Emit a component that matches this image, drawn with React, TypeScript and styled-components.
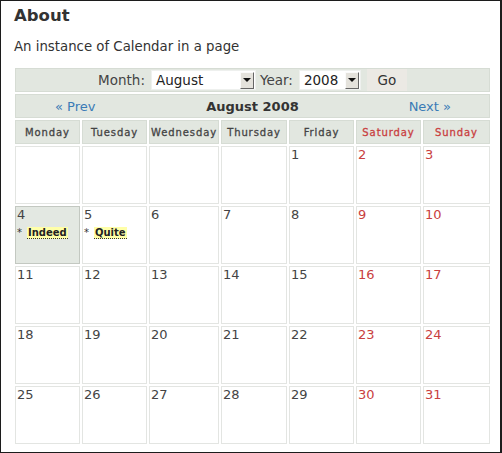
import React from "react";
import styled, { createGlobalStyle } from "styled-components";

const Global = createGlobalStyle`
  html, body { margin: 0; padding: 0; background: #fff; }
  body { font-family: "DejaVu Sans", Verdana, sans-serif; }
`;

const Frame = styled.div`
  box-sizing: border-box;
  width: 502px;
  height: 453px;
  border: 1px solid #1c1c1c;
  border-right-width: 2px;
  padding: 5px 0 0 13px;
  background: #fff;
  color: #333;
`;

const Title = styled.h1`
  margin: 0;
  font-size: 16.5px;
  font-weight: bold;
  color: #333;
  line-height: 20px;
`;

const Intro = styled.p`
  margin: 13px 0 0 0;
  font-size: 13.3px;
  line-height: 16px;
  color: #333;
`;

const Grid = styled.div`
  margin: 13px 0 0 1px;
  display: grid;
  grid-template-columns: 65px 65px 70px 66px 65px 65px 67px;
  grid-template-rows: 24px 24px 24px repeat(5, 58px);
  gap: 2px;
`;

const WideRow = styled.div`
  grid-column: 1 / -1;
  box-sizing: border-box;
  background: #e2e7e0;
  border: 1px solid #d6dcd4;
`;

const FormRow = styled(WideRow)`
  display: flex;
  align-items: center;
  justify-content: center;
  font-size: 13.5px;
  color: #444;
  padding-right: 4px;
`;

const Label = styled.span`
  margin: 0 6px 0 4px;
`;

const SelectBox = styled.div<{ $w: number }>`
  box-sizing: border-box;
  width: ${(p) => p.$w}px;
  height: 20px;
  background: #fff;
  border: 1px solid #eef0ee;
  display: flex;
  align-items: center;
  justify-content: space-between;
  padding: 0 1px 0 4px;
  color: #222;
  font-size: 13.5px;
`;

const Arrow = styled.span`
  box-sizing: border-box;
  width: 14px;
  height: 17px;
  background: #e4e2dc;
  border-top: 1px solid #fafafa;
  border-left: 1px solid #fafafa;
  border-right: 1px solid #666;
  border-bottom: 1px solid #666;
  display: flex;
  align-items: center;
  justify-content: center;
  &::after {
    content: "";
    border-left: 4px solid transparent;
    border-right: 4px solid transparent;
    border-top: 4px solid #111;
  }
`;

const GoButton = styled.span`
  box-sizing: border-box;
  width: 40px;
  height: 22px;
  margin-left: 6px;
  background: #ebe9e4;
  display: flex;
  align-items: center;
  justify-content: center;
  color: #333;
  font-size: 13.5px;
`;

const NavRow = styled(WideRow)`
  display: grid;
  grid-template-columns: 1fr auto 1fr;
  align-items: center;
  font-size: 13px;
`;

const NavLink = styled.a<{ $side: "left" | "right" }>`
  color: #3a7bb6;
  text-decoration: none;
  justify-self: ${(p) => (p.$side === "left" ? "start" : "end")};
  ${(p) => (p.$side === "left" ? "margin-left: 39px;" : "margin-right: 38px;")}
`;

const MonthTitle = styled.span`
  font-weight: bold;
  color: #333;
`;

const DayHead = styled.div<{ $weekend?: boolean }>`
  box-sizing: border-box;
  background: #e2e7e0;
  border: 1px solid #d6dcd4;
  display: flex;
  align-items: center;
  justify-content: center;
  font-size: 10px;
  letter-spacing: 0.9px;
  color: ${(p) => (p.$weekend ? "#c94040" : "#444")};
  -webkit-text-stroke: 0.3px ${(p) => (p.$weekend ? "#c94040" : "#444")};
`;

const DayCell = styled.div<{ $today?: boolean }>`
  box-sizing: border-box;
  background: ${(p) => (p.$today ? "#e3e8e2" : "#fff")};
  border: 1px solid ${(p) => (p.$today ? "#c3c8c1" : "#e3e5e2")};
  padding: 0 1px;
  font-size: 13px;
  line-height: 15px;
`;

const DayNum = styled.div<{ $weekend?: boolean }>`
  color: ${(p) => (p.$weekend ? "#c94040" : "#444")};
`;

const EventLine = styled.div`
  font-size: 10px;
  line-height: 15px;
  color: #333;
  margin-top: 3px;
`;

const EventTag = styled.span`
  font-weight: bold;
  color: #222;
  background: #ffffa8;
  border-bottom: 1px dotted #333;
  padding: 0 1px;
  margin-left: 5px;
`;

const days = ["Monday", "Tuesday", "Wednesday", "Thursday", "Friday", "Saturday", "Sunday"];
const events: Record<number, string> = { 4: "Indeed", 5: "Quite" };

export default function App() {
  const cells: (number | null)[] = [null, null, null, null];
  for (let d = 1; d <= 31; d++) cells.push(d);
  return (
    <Frame>
      <Global />
      <Title>About</Title>
      <Intro>An instance of Calendar in a page</Intro>
      <Grid>
        <FormRow>
          <Label>Month:</Label>
          <SelectBox $w={105}>
            August
            <Arrow />
          </SelectBox>
          <Label>Year:</Label>
          <SelectBox $w={62}>
            2008
            <Arrow />
          </SelectBox>
          <GoButton>Go</GoButton>
        </FormRow>
        <NavRow>
          <NavLink $side="left" href="#">« Prev</NavLink>
          <MonthTitle>August 2008</MonthTitle>
          <NavLink $side="right" href="#">Next »</NavLink>
        </NavRow>
        {days.map((d, i) => (
          <DayHead key={d} $weekend={i >= 5}>
            {d}
          </DayHead>
        ))}
        {cells.map((d, i) => {
          const weekend = i % 7 >= 5;
          return (
            <DayCell key={i} $today={d === 4}>
              {d !== null && <DayNum $weekend={weekend}>{d}</DayNum>}
              {d !== null && events[d] && (
                <EventLine>
                  *<EventTag>{events[d]}</EventTag>
                </EventLine>
              )}
            </DayCell>
          );
        })}
      </Grid>
    </Frame>
  );
}
